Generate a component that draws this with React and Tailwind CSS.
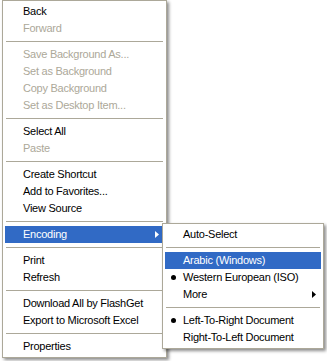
const mainItems = [
  { label: 'Back' },
  { label: 'Forward', disabled: true },
  { sep: true },
  { label: 'Save Background As...', disabled: true },
  { label: 'Set as Background', disabled: true },
  { label: 'Copy Background', disabled: true },
  { label: 'Set as Desktop Item...', disabled: true },
  { sep: true },
  { label: 'Select All' },
  { label: 'Paste', disabled: true },
  { sep: true },
  { label: 'Create Shortcut' },
  { label: 'Add to Favorites...' },
  { label: 'View Source' },
  { sep: true },
  { label: 'Encoding', active: true, submenu: true },
  { sep: true },
  { label: 'Print' },
  { label: 'Refresh' },
  { sep: true },
  { label: 'Download All by FlashGet' },
  { label: 'Export to Microsoft Excel' },
  { sep: true },
  { label: 'Properties' },
];

const encodingItems = [
  { label: 'Auto-Select' },
  { sep: true },
  { label: 'Arabic (Windows)', active: true },
  { label: 'Western European (ISO)', checked: true },
  { label: 'More', submenu: true },
  { sep: true },
  { label: 'Left-To-Right Document', checked: true },
  { label: 'Right-To-Left Document' },
];

const MenuRow = ({ item }) => {
  if (item.sep) {
    return (
      <div className="h-[9px] flex items-center px-px">
        <div className="h-px w-full bg-[#aca899]" />
      </div>
    );
  }
  const color = item.active ? 'bg-[#316ac5] text-white' : item.disabled ? 'text-[#aca899]' : 'text-black';
  return (
    <div className={`h-[17px] flex items-center whitespace-nowrap ${color}`}>
      <div className="w-[18px] shrink-0 flex pl-[6px]">
        {item.checked && <span className="w-[5px] h-[5px] rounded-full bg-black" />}
      </div>
      <span>{item.label}</span>
      {item.submenu && (
        <svg width="4" height="7" viewBox="0 0 4 7" className="ml-auto mr-[5px]">
          <path d="M0 0 L4 3.5 L0 7 Z" fill={item.active ? '#ffffff' : '#000000'} />
        </svg>
      )}
    </div>
  );
};

export default function App() {
  return (
    <div
      className="relative w-[327px] h-[361px] bg-white overflow-hidden text-[11px] leading-[17px] tracking-[-0.25px]"
      style={{ fontFamily: '"Liberation Sans", Arial, sans-serif' }}
    >
      <div className="ml-[2px] w-[165px] border border-[#aca899] bg-white p-[2px] shadow-[2px_2px_3px_rgba(0,0,0,0.45)]">
        {mainItems.map((item, i) => (
          <MenuRow key={i} item={item} />
        ))}
      </div>

      <div className="absolute left-[162px] top-[223px] w-[162px] border border-[#aca899] bg-white p-[2px] shadow-[2px_2px_3px_rgba(0,0,0,0.45)]">
        {encodingItems.map((item, i) => (
          <MenuRow key={i} item={item} />
        ))}
      </div>
    </div>
  );
}
